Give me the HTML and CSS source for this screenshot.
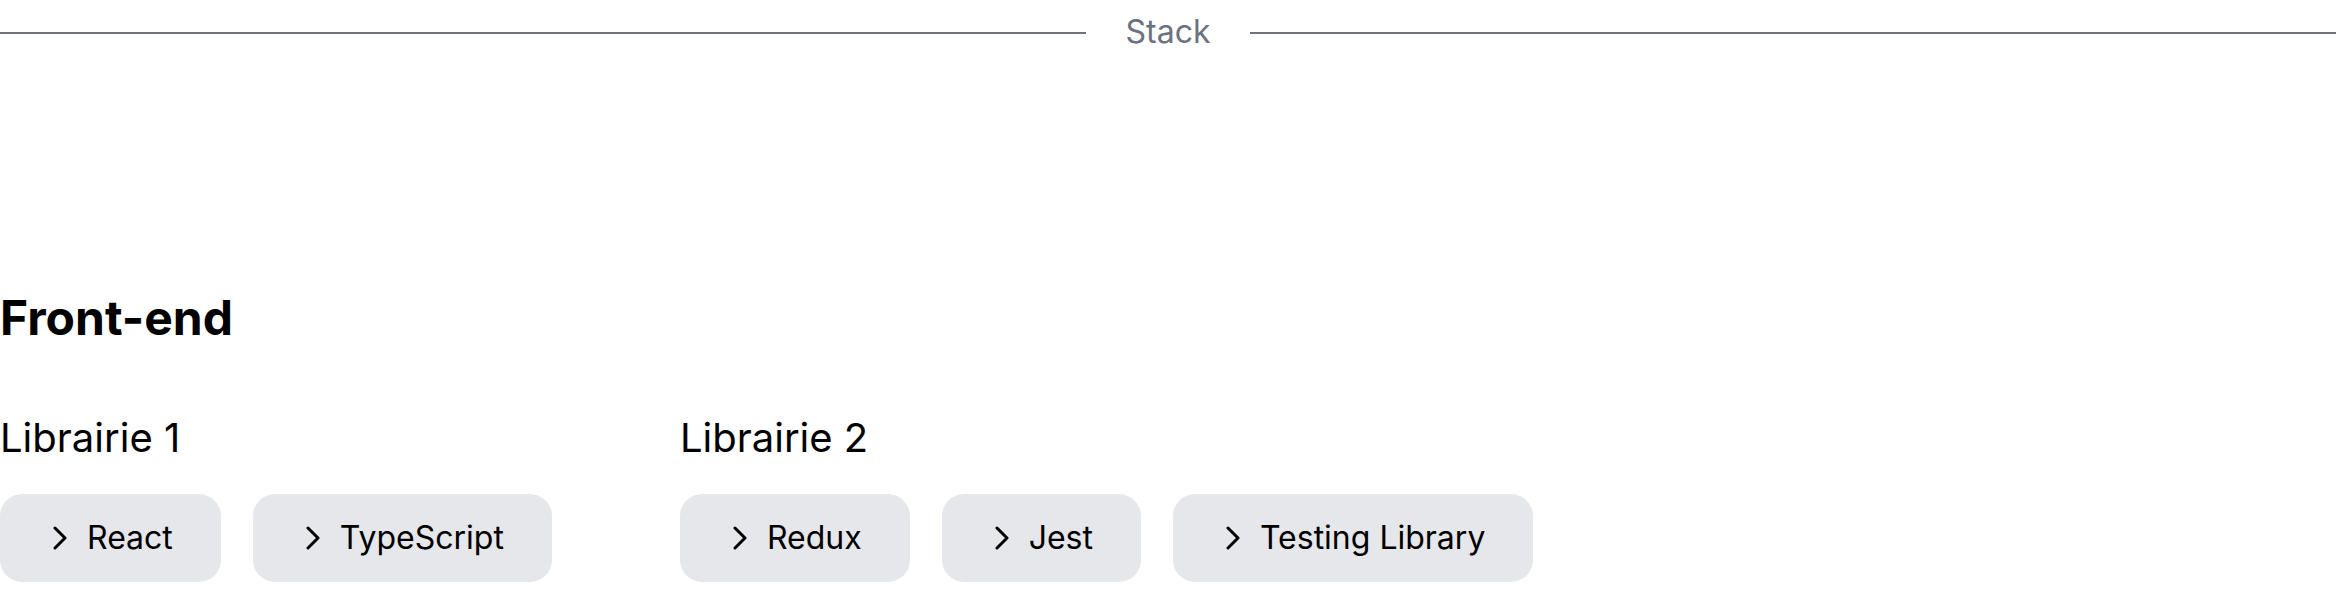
FILE: index.html
```html
<!DOCTYPE html>
<html lang="fr">
<head>
<meta charset="utf-8">
<title>Stack</title>
<link rel="stylesheet" href="styles.css">
</head>
<body>
  <div class="divider">
    <span class="divider-line"></span>
    <span class="divider-label">Stack</span>
    <span class="divider-line"></span>
  </div>

  <section class="category">
    <h2 class="category-title">Front-end</h2>
    <div class="libraries">
      <div class="library">
        <h3 class="library-title">Librairie 1</h3>
        <div class="chips">
          <button class="chip"><svg class="chev" viewBox="0 0 24 24"><polyline points="7,2 17,12 7,22"/></svg><span>React</span></button>
          <button class="chip"><svg class="chev" viewBox="0 0 24 24"><polyline points="7,2 17,12 7,22"/></svg><span>TypeScript</span></button>
        </div>
      </div>
      <div class="library">
        <h3 class="library-title">Librairie 2</h3>
        <div class="chips">
          <button class="chip"><svg class="chev" viewBox="0 0 24 24"><polyline points="7,2 17,12 7,22"/></svg><span>Redux</span></button>
          <button class="chip"><svg class="chev" viewBox="0 0 24 24"><polyline points="7,2 17,12 7,22"/></svg><span>Jest</span></button>
          <button class="chip"><svg class="chev" viewBox="0 0 24 24"><polyline points="7,2 17,12 7,22"/></svg><span>Testing Library</span></button>
        </div>
      </div>
    </div>
  </section>
</body>
</html>
```

FILE: styles.css
```css
* { box-sizing: border-box; }

body {
  margin: 0;
  background: #ffffff;
  color: #000000;
  font-family: Inter, "Noto Sans", sans-serif;
}

.divider {
  display: flex;
  align-items: center;
  padding-top: 8px;
}

.divider-line {
  flex: 1;
  height: 2px;
  margin-top: 2px;
  background: #6b7280;
}

.divider-label {
  padding: 0 40px;
  font-size: 32px;
  line-height: 48px;
  color: #6b7280;
}

.category {
  margin-top: 238px;
}

.category-title {
  margin: 0 0 72px;
  font-size: 48px;
  line-height: 48px;
  font-weight: 700;
}

.libraries {
  display: flex;
  gap: 128px;
}

.library-title {
  margin: 0 0 32px;
  font-size: 40px;
  line-height: 48px;
  font-weight: 400;
}

.chips {
  display: flex;
  gap: 32px;
}

.chip {
  display: flex;
  align-items: center;
  gap: 15px;
  height: 88px;
  padding: 0 48px;
  border: none;
  border-radius: 22px;
  background: #e5e7eb;
  color: #000000;
  font-family: inherit;
  font-size: 32px;
  line-height: 40px;
}

.chev {
  width: 24px;
  height: 24px;
  fill: none;
  stroke: #000000;
  stroke-width: 3;
  stroke-linecap: round;
  stroke-linejoin: round;
}
```
